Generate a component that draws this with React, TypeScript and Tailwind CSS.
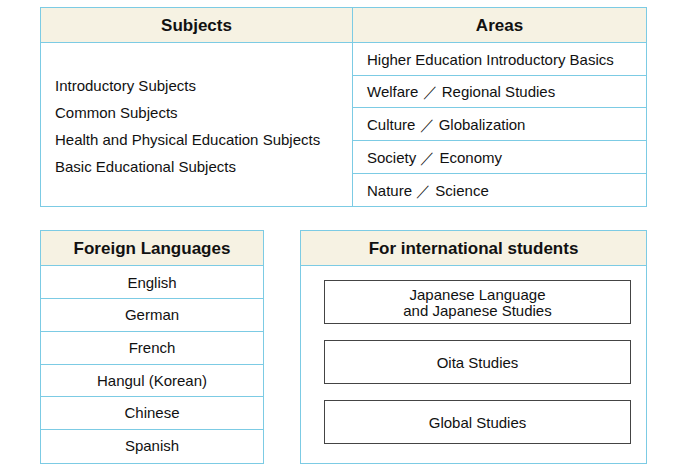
import React from "react";

const font = { fontFamily: '"Liberation Sans", Arial, sans-serif' };

export default function App() {
  const subjects = [
    "Introductory Subjects",
    "Common Subjects",
    "Health and Physical Education Subjects",
    "Basic Educational Subjects",
  ];
  const areas = [
    "Higher Education Introductory Basics",
    "Welfare ／ Regional Studies",
    "Culture ／ Globalization",
    "Society ／ Economy",
    "Nature ／ Science",
  ];
  const langs = ["English", "German", "French", "Hangul (Korean)", "Chinese", "Spanish"];
  const intl = [["Japanese Language", "and Japanese Studies"], ["Oita Studies"], ["Global Studies"]];

  return (
    <div className="w-[688px] h-[470px] bg-white text-[#111]" style={font}>
      <div className="pt-[7px] pl-[40px]">
        {/* Top table */}
        <div className="w-[607px] border border-[#7ccbe4] flex">
          <div className="w-[312px] border-r border-[#7ccbe4] flex flex-col">
            <div className="h-[35px] bg-[#f6f2e3] border-b border-[#7ccbe4] flex items-center justify-center font-bold text-[17px] pt-[1px]">
              Subjects
            </div>
            <div className="flex-1 flex flex-col justify-center pl-[14px] gap-[8px] text-[15px] leading-[19px] pt-[2px]">
              {subjects.map((s) => (
                <div key={s}>{s}</div>
              ))}
            </div>
          </div>
          <div className="flex-1 flex flex-col">
            <div className="h-[35px] bg-[#f6f2e3] border-b border-[#7ccbe4] flex items-center justify-center font-bold text-[17px] pt-[1px]">
              Areas
            </div>
            {areas.map((a, i) => (
              <div
                key={a}
                className={`h-[32.7px] flex items-center pl-[14px] pt-[2px] text-[15px] ${i < areas.length - 1 ? "border-b border-[#7ccbe4]" : ""}`}
              >
                {a}
              </div>
            ))}
          </div>
        </div>

        {/* Bottom row */}
        <div className="flex gap-[36px] mt-[23px]">
          <div className="w-[224px] border border-[#7ccbe4] flex flex-col">
            <div className="h-[35px] bg-[#f6f2e3] border-b border-[#7ccbe4] flex items-center justify-center font-bold text-[17px] pt-[1px]">
              Foreign Languages
            </div>
            {langs.map((l, i) => (
              <div
                key={l}
                className={`h-[32.7px] flex items-center justify-center pt-[1px] text-[15px] ${i < langs.length - 1 ? "border-b border-[#7ccbe4]" : ""}`}
              >
                {l}
              </div>
            ))}
          </div>
          <div className="w-[347px] border border-[#7ccbe4] flex flex-col">
            <div className="h-[35px] bg-[#f6f2e3] border-b border-[#7ccbe4] flex items-center justify-center font-bold text-[17px] pt-[1px]">
              For international students
            </div>
            <div className="flex flex-col gap-[16px] pt-[14px] pb-[17px] pl-[23px] pr-[16px]">
              {intl.map((lines) => (
                <div
                  key={lines[0]}
                  className="w-[307px] h-[44px] border border-[#444] flex flex-col items-center justify-center pt-[1px] text-[15px] leading-[16px]"
                >
                  {lines.map((ln) => (
                    <div key={ln}>{ln}</div>
                  ))}
                </div>
              ))}
            </div>
          </div>
        </div>
      </div>
    </div>
  );
}
